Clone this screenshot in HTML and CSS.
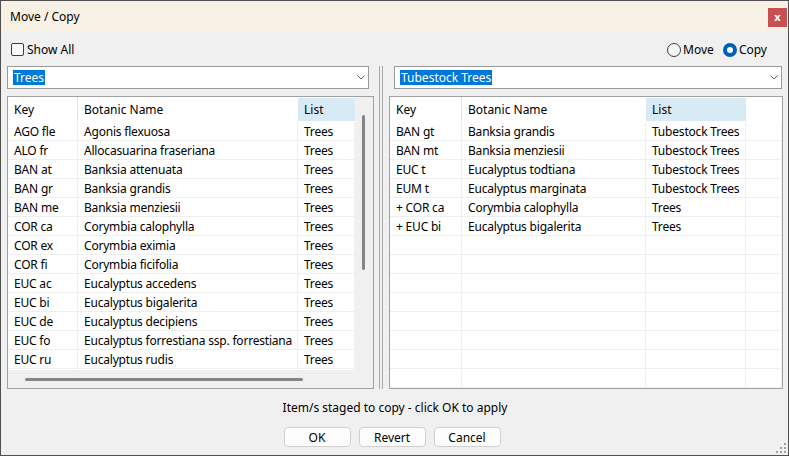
FILE: index.html
```html
<!DOCTYPE html>
<html lang="en">
<head>
  <meta charset="UTF-8">
  <title>Move / Copy</title>
  <link rel="stylesheet" href="styles.css">
</head>
<body>
  <div class="window">
    <div class="titlebar">
      <span class="title">Move / Copy</span>
      <span class="close">x</span>
    </div>

    <div class="content">
      <!-- Options -->
      <div class="options">
        <label class="check"><span class="box"></span>Show All</label>
        <div class="mode">
          <label class="radio"><span class="dot"></span>Move</label>
          <label class="radio on"><span class="dot"></span>Copy</label>
        </div>
      </div>

      <!-- Source / destination lists -->
      <div class="panes">
        <div class="pane pane-left">
          <div class="combo">
            <span class="sel">Trees</span>
            <svg class="chev" width="8" height="5" viewBox="0 0 8 5"><path d="M0.5 0.5 L4 4 L7.5 0.5" fill="none" stroke="#606060" stroke-width="1"/></svg>
          </div>
          <div class="grid grid-left">
            <div class="view">
              <div class="row head">
                <span class="sep">Key</span><span>Botanic Name</span><span class="hl">List</span>
              </div>
              <div class="row"><span>AGO fle</span><span>Agonis flexuosa</span><span>Trees</span></div>
              <div class="row"><span>ALO fr</span><span>Allocasuarina fraseriana</span><span>Trees</span></div>
              <div class="row"><span>BAN at</span><span>Banksia attenuata</span><span>Trees</span></div>
              <div class="row"><span>BAN gr</span><span>Banksia grandis</span><span>Trees</span></div>
              <div class="row"><span>BAN me</span><span>Banksia menziesii</span><span>Trees</span></div>
              <div class="row"><span>COR ca</span><span>Corymbia calophylla</span><span>Trees</span></div>
              <div class="row"><span>COR ex</span><span>Corymbia eximia</span><span>Trees</span></div>
              <div class="row"><span>COR fi</span><span>Corymbia ficifolia</span><span>Trees</span></div>
              <div class="row"><span>EUC ac</span><span>Eucalyptus accedens</span><span>Trees</span></div>
              <div class="row"><span>EUC bi</span><span>Eucalyptus bigalerita</span><span>Trees</span></div>
              <div class="row"><span>EUC de</span><span>Eucalyptus decipiens</span><span>Trees</span></div>
              <div class="row"><span>EUC fo</span><span>Eucalyptus forrestiana ssp. forrestiana</span><span>Trees</span></div>
              <div class="row"><span>EUC ru</span><span>Eucalyptus rudis</span><span>Trees</span></div>
              <div class="row"><span></span><span></span><span></span></div>
            </div>
            <div class="vscroll"><span class="thumb"></span></div>
            <div class="hscroll"><span class="thumb"></span></div>
            <div class="corner"></div>
          </div>
        </div>

        <div class="splitter"></div>

        <div class="pane pane-right">
          <div class="combo">
            <span class="sel">Tubestock Trees</span>
            <svg class="chev" width="8" height="5" viewBox="0 0 8 5"><path d="M0.5 0.5 L4 4 L7.5 0.5" fill="none" stroke="#606060" stroke-width="1"/></svg>
          </div>
          <div class="grid grid-right">
            <div class="row head">
              <span class="sep">Key</span><span>Botanic Name</span><span class="hl">List</span><span></span>
            </div>
            <div class="row"><span>BAN gt</span><span>Banksia grandis</span><span>Tubestock Trees</span><span></span></div>
            <div class="row"><span>BAN mt</span><span>Banksia menziesii</span><span>Tubestock Trees</span><span></span></div>
            <div class="row"><span>EUC t</span><span>Eucalyptus todtiana</span><span>Tubestock Trees</span><span></span></div>
            <div class="row"><span>EUM t</span><span>Eucalyptus marginata</span><span>Tubestock Trees</span><span></span></div>
            <div class="row"><span>+ COR ca</span><span>Corymbia calophylla</span><span>Trees</span><span></span></div>
            <div class="row"><span>+ EUC bi</span><span>Eucalyptus bigalerita</span><span>Trees</span><span></span></div>
            <div class="row"><span></span><span></span><span></span><span></span></div>
            <div class="row"><span></span><span></span><span></span><span></span></div>
            <div class="row"><span></span><span></span><span></span><span></span></div>
            <div class="row"><span></span><span></span><span></span><span></span></div>
            <div class="row"><span></span><span></span><span></span><span></span></div>
            <div class="row"><span></span><span></span><span></span><span></span></div>
            <div class="row"><span></span><span></span><span></span><span></span></div>
            <div class="row"><span></span><span></span><span></span><span></span></div>
          </div>
        </div>
      </div>

      <div class="status">Item/s staged to copy - click OK to apply</div>

      <div class="buttons">
        <button>OK</button>
        <button>Revert</button>
        <button>Cancel</button>
      </div>
    </div>

    <svg class="grip" width="12" height="12" viewBox="0 0 12 12">
      <rect x="10" y="2" width="2" height="2" fill="#a0a0a0"/>
      <rect x="6" y="6" width="2" height="2" fill="#a0a0a0"/>
      <rect x="10" y="6" width="2" height="2" fill="#a0a0a0"/>
      <rect x="2" y="10" width="2" height="2" fill="#a0a0a0"/>
      <rect x="6" y="10" width="2" height="2" fill="#a0a0a0"/>
      <rect x="10" y="10" width="2" height="2" fill="#a0a0a0"/>
    </svg>
  </div>
</body>
</html>
```

FILE: styles.css
```css
body {
  margin: 0;
  font-family: "Noto Sans", "Open Sans", sans-serif;
  font-size: 12px;
  color: #000;
}
.window {
  position: relative;
  width: 789px;
  height: 456px;
  box-sizing: border-box;
  border: 1px solid #505050;
  background: #f0f0f0;
  display: flex;
  flex-direction: column;
}
.titlebar {
  height: 30px;
  flex: none;
  display: flex;
  align-items: center;
  justify-content: space-between;
  padding: 0 1px 0 9px;
  background: #f8f1e5;
}
.close {
  width: 19px;
  height: 19px;
  margin-top: 3px;
  background: #c75050;
  color: #fff;
  font-weight: bold;
  font-size: 11px;
  line-height: 17px;
  text-align: center;
}
.content {
  flex: 1;
  display: flex;
  flex-direction: column;
  padding: 0 5px 8px 6px;
}
.options {
  height: 35px;
  box-sizing: border-box;
  padding-top: 2px;
  display: flex;
  align-items: center;
  justify-content: space-between;
}
.check, .radio {
  display: flex;
  align-items: center;
  gap: 2px;
}
.check {
  margin-left: 4px;
  gap: 3px;
}
.check .box {
  width: 13px;
  height: 13px;
  box-sizing: border-box;
  border: 1px solid #3c3c3c;
  border-radius: 2px;
  background: #fbfbfb;
}
.mode {
  display: flex;
  gap: 9px;
  margin-right: 16px;
}
.radio .dot {
  width: 14px;
  height: 14px;
  box-sizing: border-box;
  border: 1px solid #3c3c3c;
  border-radius: 50%;
  background: #f8f8f8;
}
.radio.on .dot {
  border: 4px solid #005fb8;
  background: #fff;
}
.panes {
  height: 323px;
  flex: none;
  display: flex;
}
.pane {
  display: flex;
  flex-direction: column;
  gap: 7px;
}
.pane-left {
  width: 367px;
}
.pane-right {
  width: 394px;
}
.combo {
  height: 23px;
  box-sizing: border-box;
  border: 1px solid #999;
  background: #fff;
  display: flex;
  align-items: center;
  justify-content: space-between;
  padding: 0 3px 0 5px;
}
.pane-left .combo {
  margin-right: 5px;
}
.pane-right .combo {
  margin: 0 1px 0 5px;
}
.sel {
  background: #0078d7;
  color: #fff;
  line-height: 15px;
  padding: 0 1px;
}
.splitter {
  width: 2px;
  margin: 0 6px 0 5px;
  border-left: 1px solid #a8a8a8;
  border-right: 1px solid #a8a8a8;
}
.grid {
  height: 293px;
  box-sizing: border-box;
  border: 1px solid #a0a0a0;
  overflow: hidden;
}
.grid-left {
  display: grid;
  grid-template-columns: 347px 18px;
  grid-template-rows: 273px 18px;
  background: #f0f0f0;
}
.grid-left .view {
  overflow: hidden;
  background: #fff;
}
.grid-right {
  background: #fff;
}
.row {
  display: grid;
  height: 19px;
}
.grid-left .row {
  grid-template-columns: 70px 220px 57px;
}
.grid-right .row {
  grid-template-columns: 72px 184px 100px 36px;
}
.row span {
  box-sizing: border-box;
  padding-left: 6px;
  border-right: 1px solid #efefef;
  border-bottom: 1px solid #efefef;
  line-height: 20px;
  letter-spacing: -0.2px;
  white-space: nowrap;
  overflow: hidden;
}
.row.head {
  height: 25px;
}
.row.head span {
  border: none;
  line-height: 26px;
  letter-spacing: 0;
}
.row.head span.sep {
  border-right: 1px solid #e5e5e5;
}
.row.head span.hl {
  background: #d9eaf7;
  margin-top: 1px;
  line-height: 24px;
  height: 23px;
}
.vscroll .thumb {
  display: block;
  width: 3px;
  height: 155px;
  margin: 18px 0 0 7px;
  background: #858585;
  border-radius: 2px;
}
.hscroll .thumb {
  display: block;
  width: 278px;
  height: 3px;
  margin: 8px 0 0 17px;
  background: #858585;
  border-radius: 2px;
}
.status {
  height: 38px;
  line-height: 38px;
  text-align: center;
}
.buttons {
  display: flex;
  justify-content: center;
  gap: 8px;
  margin-right: 6px;
}
.buttons button {
  width: 67px;
  height: 20px;
  padding: 0;
  font: inherit;
  color: #000;
  background: #fdfdfd;
  border: 1px solid #d0d0d0;
  border-radius: 4px;
}
.grip {
  position: absolute;
  right: 2px;
  bottom: 2px;
}
```
